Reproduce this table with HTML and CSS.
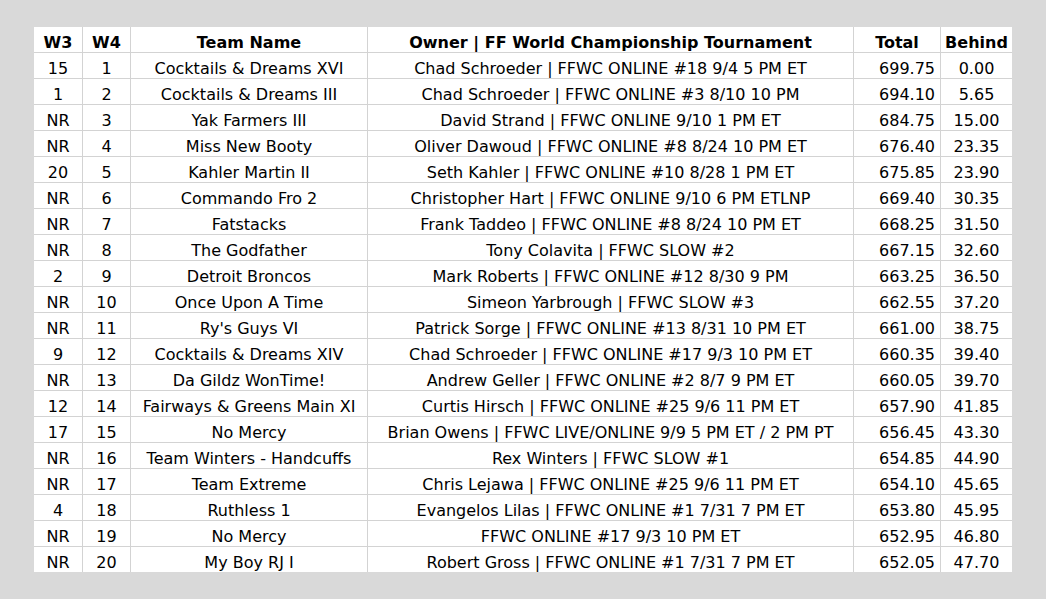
FILE: index.html
```html
<!DOCTYPE html>
<html>
<head>
<meta charset="utf-8">
<link rel="stylesheet" href="styles.css">
</head>
<body>
<table class="standings">
<thead>
<tr><th class="c-w3">W3</th><th class="c-w4">W4</th><th class="c-team">Team Name</th><th class="c-owner">Owner | FF World Championship Tournament</th><th class="c-total">Total</th><th class="c-behind">Behind</th></tr>
</thead>
<tbody>
<tr><td>15</td><td>1</td><td>Cocktails &amp; Dreams XVI</td><td>Chad Schroeder | FFWC ONLINE #18 9/4 5 PM ET</td><td class="num">699.75</td><td>0.00</td></tr>
<tr><td>1</td><td>2</td><td>Cocktails &amp; Dreams III</td><td>Chad Schroeder | FFWC ONLINE #3 8/10 10 PM</td><td class="num">694.10</td><td>5.65</td></tr>
<tr><td>NR</td><td>3</td><td>Yak Farmers III</td><td>David Strand | FFWC ONLINE 9/10 1 PM ET</td><td class="num">684.75</td><td>15.00</td></tr>
<tr><td>NR</td><td>4</td><td>Miss New Booty</td><td>Oliver Dawoud | FFWC ONLINE #8 8/24 10 PM ET</td><td class="num">676.40</td><td>23.35</td></tr>
<tr><td>20</td><td>5</td><td>Kahler Martin II</td><td>Seth Kahler | FFWC ONLINE #10 8/28 1 PM ET</td><td class="num">675.85</td><td>23.90</td></tr>
<tr><td>NR</td><td>6</td><td>Commando Fro 2</td><td>Christopher Hart | FFWC ONLINE 9/10 6 PM ETLNP</td><td class="num">669.40</td><td>30.35</td></tr>
<tr><td>NR</td><td>7</td><td>Fatstacks</td><td>Frank Taddeo | FFWC ONLINE #8 8/24 10 PM ET</td><td class="num">668.25</td><td>31.50</td></tr>
<tr><td>NR</td><td>8</td><td>The Godfather</td><td>Tony Colavita | FFWC SLOW #2</td><td class="num">667.15</td><td>32.60</td></tr>
<tr><td>2</td><td>9</td><td>Detroit Broncos</td><td>Mark Roberts | FFWC ONLINE #12 8/30 9 PM</td><td class="num">663.25</td><td>36.50</td></tr>
<tr><td>NR</td><td>10</td><td>Once Upon A Time</td><td>Simeon Yarbrough | FFWC SLOW #3</td><td class="num">662.55</td><td>37.20</td></tr>
<tr><td>NR</td><td>11</td><td>Ry's Guys VI</td><td>Patrick Sorge | FFWC ONLINE #13 8/31 10 PM ET</td><td class="num">661.00</td><td>38.75</td></tr>
<tr><td>9</td><td>12</td><td>Cocktails &amp; Dreams XIV</td><td>Chad Schroeder | FFWC ONLINE #17 9/3 10 PM ET</td><td class="num">660.35</td><td>39.40</td></tr>
<tr><td>NR</td><td>13</td><td>Da Gildz WonTime!</td><td>Andrew Geller | FFWC ONLINE #2 8/7 9 PM ET</td><td class="num">660.05</td><td>39.70</td></tr>
<tr><td>12</td><td>14</td><td>Fairways &amp; Greens Main XI</td><td>Curtis Hirsch | FFWC ONLINE #25 9/6 11 PM ET</td><td class="num">657.90</td><td>41.85</td></tr>
<tr><td>17</td><td>15</td><td>No Mercy</td><td>Brian Owens | FFWC LIVE/ONLINE 9/9 5 PM ET / 2 PM PT</td><td class="num">656.45</td><td>43.30</td></tr>
<tr><td>NR</td><td>16</td><td>Team Winters - Handcuffs</td><td>Rex Winters | FFWC SLOW #1</td><td class="num">654.85</td><td>44.90</td></tr>
<tr><td>NR</td><td>17</td><td>Team Extreme</td><td>Chris Lejawa | FFWC ONLINE #25 9/6 11 PM ET</td><td class="num">654.10</td><td>45.65</td></tr>
<tr><td>4</td><td>18</td><td>Ruthless 1</td><td>Evangelos Lilas | FFWC ONLINE #1 7/31 7 PM ET</td><td class="num">653.80</td><td>45.95</td></tr>
<tr><td>NR</td><td>19</td><td>No Mercy</td><td>FFWC ONLINE #17 9/3 10 PM ET</td><td class="num">652.95</td><td>46.80</td></tr>
<tr class="last"><td>NR</td><td>20</td><td>My Boy RJ I</td><td>Robert Gross | FFWC ONLINE #1 7/31 7 PM ET</td><td class="num">652.05</td><td>47.70</td></tr>
</tbody>
</table>
</body>
</html>
```

FILE: styles.css
```css
html, body {
  margin: 0;
  padding: 0;
  background: #d9d9d9;
}

body {
  padding: 27px 0 0 34px;
  font-family: "DejaVu Sans", Verdana, sans-serif;
  font-size: 16px;
  color: #000;
}

.standings {
  border-collapse: separate;
  border-spacing: 0;
  table-layout: fixed;
  width: 978px;
  background: #fff;
}

.standings th,
.standings td {
  box-sizing: border-box;
  height: 26px;
  padding: 6px 0 0 0;
  line-height: 19px;
  text-align: center;
  white-space: nowrap;
  border-right: 1px solid #d3d3d3;
  border-bottom: 1px solid #d3d3d3;
  vertical-align: top;
}

.standings th {
  font-weight: bold;
}

.standings th:last-child,
.standings td:last-child {
  border-right: none;
}

.standings tr.last td {
  border-bottom: none;
  height: 25px;
}

.c-w3 { width: 49px; }
.c-w4 { width: 48px; }
.c-team { width: 237px; }
.c-owner { width: 486px; }
.c-total { width: 87px; }
.c-behind { width: 71px; }

.standings td.num {
  text-align: right;
  padding-right: 5px;
}
```
